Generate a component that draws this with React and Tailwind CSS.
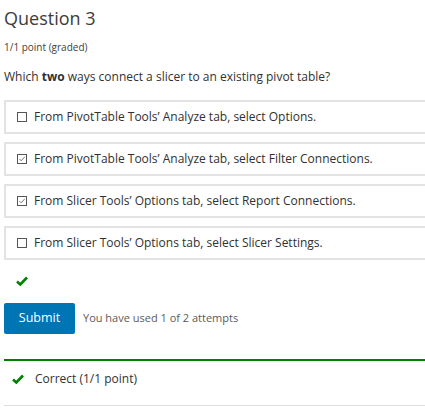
import { useState } from 'react';

const options = [
    { id: 1, text: 'From PivotTable Tools’ Analyze tab, select Options.', checked: false },
    { id: 2, text: 'From PivotTable Tools’ Analyze tab, select Filter Connections.', checked: true },
    { id: 3, text: 'From Slicer Tools’ Options tab, select Report Connections.', checked: true },
    { id: 4, text: 'From Slicer Tools’ Options tab, select Slicer Settings.', checked: false },
];

const Check = ({ className }) => (
    <svg viewBox="0 0 12 10" className={className}>
        <path d="M1 5.5 L4.3 8.5 L11 1.5" fill="none" stroke="#008100" strokeWidth="2.6" />
    </svg>
);

const Box = ({ checked }) => (
    <span className="w-[10px] h-[10px] border border-[#555] bg-white flex items-center justify-center shrink-0">
        {checked && (
            <svg viewBox="0 0 8 8" className="w-[8px] h-[8px]">
                <path d="M1.5 4 L3.2 5.8 L6.8 1.8" fill="none" stroke="#777" strokeWidth="1" />
            </svg>
        )}
    </span>
);

const App = () => {
    const [answers] = useState(options);

    return (
        <div className="w-[425px] h-[411px] overflow-hidden bg-white pl-[4px] pt-[6px] text-[#313131]" style={{ fontFamily: '"Open Sans", sans-serif' }}>
            <h3 className="text-[18px] leading-[24px] text-[#3c3c3c]">Question 3</h3>
            <div className="text-[10px] leading-[14px] mt-[10px] text-[#414141]">1/1 point (graded)</div>
            <p className="text-[12px] leading-[16px] mt-[15px]">
                Which <b>two</b> ways connect a slicer to an existing pivot table?
            </p>

            <div className="mt-[15px] flex flex-col gap-[8px] w-[440px]">
                {answers.map(opt => (
                    <label key={opt.id} className="h-[34px] border-2 border-[#e3e3e3] flex items-center pl-[11px] gap-[7px] text-[12px]">
                        <Box checked={opt.checked} />
                        <span>{opt.text}</span>
                    </label>
                ))}
            </div>

            <Check className="w-[12px] h-[10px] ml-[12px] mt-[16px]" />

            <div className="flex items-center mt-[17px] gap-[8px]">
                <button className="w-[71px] h-[31px] bg-[#0075b4] text-white text-[12.5px] rounded-[2px]">Submit</button>
                <span className="text-[11px] text-[#5b5b5b]">You have used 1 of 2 attempts</span>
            </div>

            <div className="mt-[25px] border-t-2 border-[#008100] w-[421px]">
                <div className="flex items-start h-[45px] pt-[10px] pl-[8px] gap-[11px] text-[12px] leading-[16px] border-b border-[#dddddd]">
                    <Check className="w-[12px] h-[10px] mt-[3px]" />
                    <span>Correct (1/1 point)</span>
                </div>
            </div>
        </div>
    );
};

export default App;
